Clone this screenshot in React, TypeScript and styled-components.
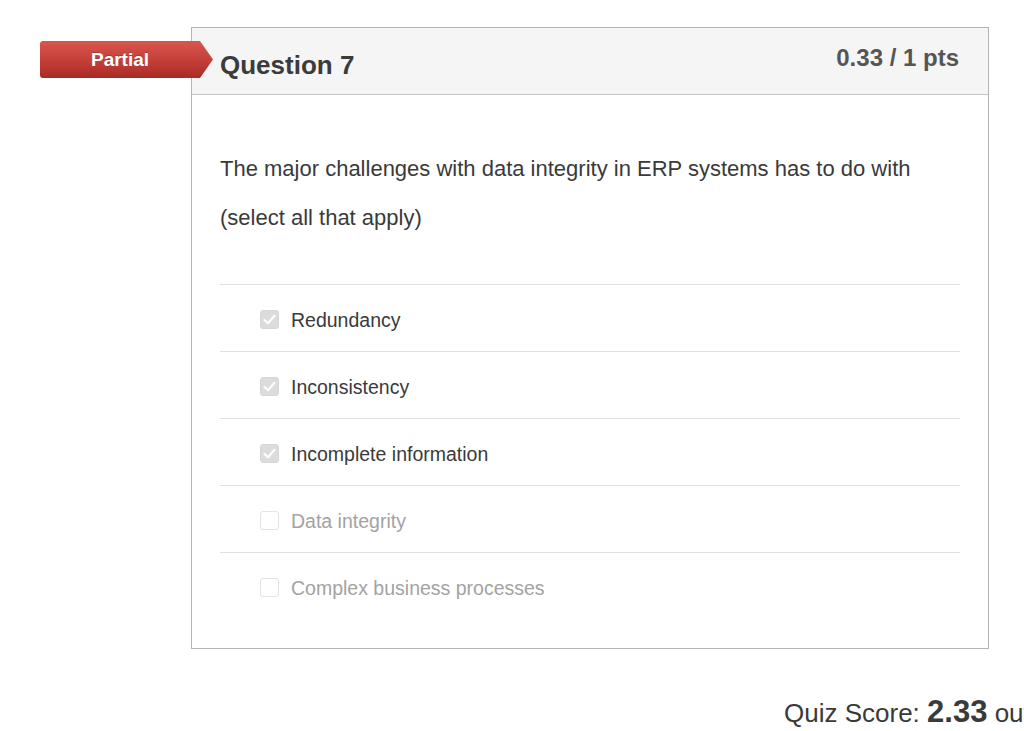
import styled, { createGlobalStyle } from 'styled-components';

const GlobalStyle = createGlobalStyle`
  html, body {
    margin: 0;
    padding: 0;
    background: #fff;
  }
  body {
    font-family: "Liberation Sans", Arial, Helvetica, sans-serif;
    color: #333;
  }
`;

const Page = styled.div`
  width: 1024px;
  height: 731px;
  overflow: hidden;
  padding: 27px 0 0 191px;
  box-sizing: border-box;
`;

const Card = styled.div`
  position: relative;
  width: 798px;
  box-sizing: border-box;
  border: 1px solid #b4b4b4;
`;

// red "Partial" ribbon hanging over the card's left edge
const Badge = styled.div`
  position: absolute;
  left: -152px;
  top: 13px;
  width: 173px;
  height: 37px;
  box-sizing: border-box;
  padding-right: 13px;
  display: flex;
  align-items: center;
  justify-content: center;
  background: linear-gradient(to bottom, #d9564f 0%, #c23f38 55%, #a92a24 100%);
  border-radius: 3px 0 0 3px;
  clip-path: polygon(0 0, calc(100% - 13px) 0, 100% 50%, calc(100% - 13px) 100%, 0 100%);
  color: #fff;
  font-size: 19px;
  font-weight: bold;
  text-shadow: 0 -1px 0 rgba(0, 0, 0, 0.2);
`;

const Header = styled.div`
  display: flex;
  justify-content: space-between;
  align-items: flex-start;
  height: 67px;
  box-sizing: border-box;
  padding: 0 29px 0 28px;
  background: #f5f5f5;
  border-bottom: 1px solid #c4c4c4;
`;

const Title = styled.h2`
  margin: 24px 0 0;
  font-size: 26px;
  line-height: 1;
  font-weight: bold;
  color: #3b3b3b;
`;

const Points = styled.div`
  margin-top: 18px;
  font-size: 24px;
  line-height: 1;
  font-weight: bold;
  color: #555;
`;

const Body = styled.div`
  padding: 49px 28px 29px 28px;
`;

const QuestionText = styled.p`
  margin: 0 0 42px;
  font-size: 22px;
  line-height: 49px;
  color: #3a3a3a;
`;

const AnswerList = styled.div`
  display: flex;
  flex-direction: column;
`;

const AnswerRow = styled.div`
  display: flex;
  align-items: center;
  gap: 12px;
  height: 67px;
  box-sizing: border-box;
  padding: 3px 0 0 40px;
  border-top: 1px solid #e1e1e1;
`;

const Box = styled.span<{ $checked: boolean }>`
  display: flex;
  align-items: center;
  justify-content: center;
  width: 19px;
  height: 19px;
  box-sizing: border-box;
  border-radius: 3px;
  background: ${(p) => (p.$checked ? '#dcdcdc' : '#fff')};
  border: 1px solid ${(p) => (p.$checked ? '#d6d6d6' : '#e3e3e3')};
`;

const AnswerText = styled.span<{ $checked: boolean }>`
  font-size: 19.5px;
  line-height: 24px;
  color: ${(p) => (p.$checked ? '#3a3a3a' : '#a3a3a3')};
`;

const ScoreLine = styled.div`
  margin: 46px 0 0 593px;
  white-space: nowrap;
  font-size: 26px;
  line-height: 34px;
  color: #3a3a3a;

  strong {
    font-size: 31px;
    font-weight: bold;
  }
`;

const answers = [
  { text: 'Redundancy', checked: true },
  { text: 'Inconsistency', checked: true },
  { text: 'Incomplete information', checked: true },
  { text: 'Data integrity', checked: false },
  { text: 'Complex business processes', checked: false },
];

const Check = () => (
  <svg width="13" height="11" viewBox="0 0 13 11">
    <path d="M1.5 6 L5 9.2 L11.5 1.8" fill="none" stroke="#fff" strokeWidth="2.2" strokeLinecap="round" strokeLinejoin="round" />
  </svg>
);

export default function App() {
  return (
    <>
      <GlobalStyle />
      <Page>
        <Card>
          <Badge>Partial</Badge>
          <Header>
            <Title>Question 7</Title>
            <Points>0.33 / 1 pts</Points>
          </Header>
          <Body>
            <QuestionText>
              The major challenges with data integrity in ERP systems has to do with (select all that apply)
            </QuestionText>
            <AnswerList>
              {answers.map((a) => (
                <AnswerRow key={a.text}>
                  <Box $checked={a.checked}>{a.checked && <Check />}</Box>
                  <AnswerText $checked={a.checked}>{a.text}</AnswerText>
                </AnswerRow>
              ))}
            </AnswerList>
          </Body>
        </Card>
        <ScoreLine>
          Quiz Score: <strong>2.33</strong> out of 3
        </ScoreLine>
      </Page>
    </>
  );
}
